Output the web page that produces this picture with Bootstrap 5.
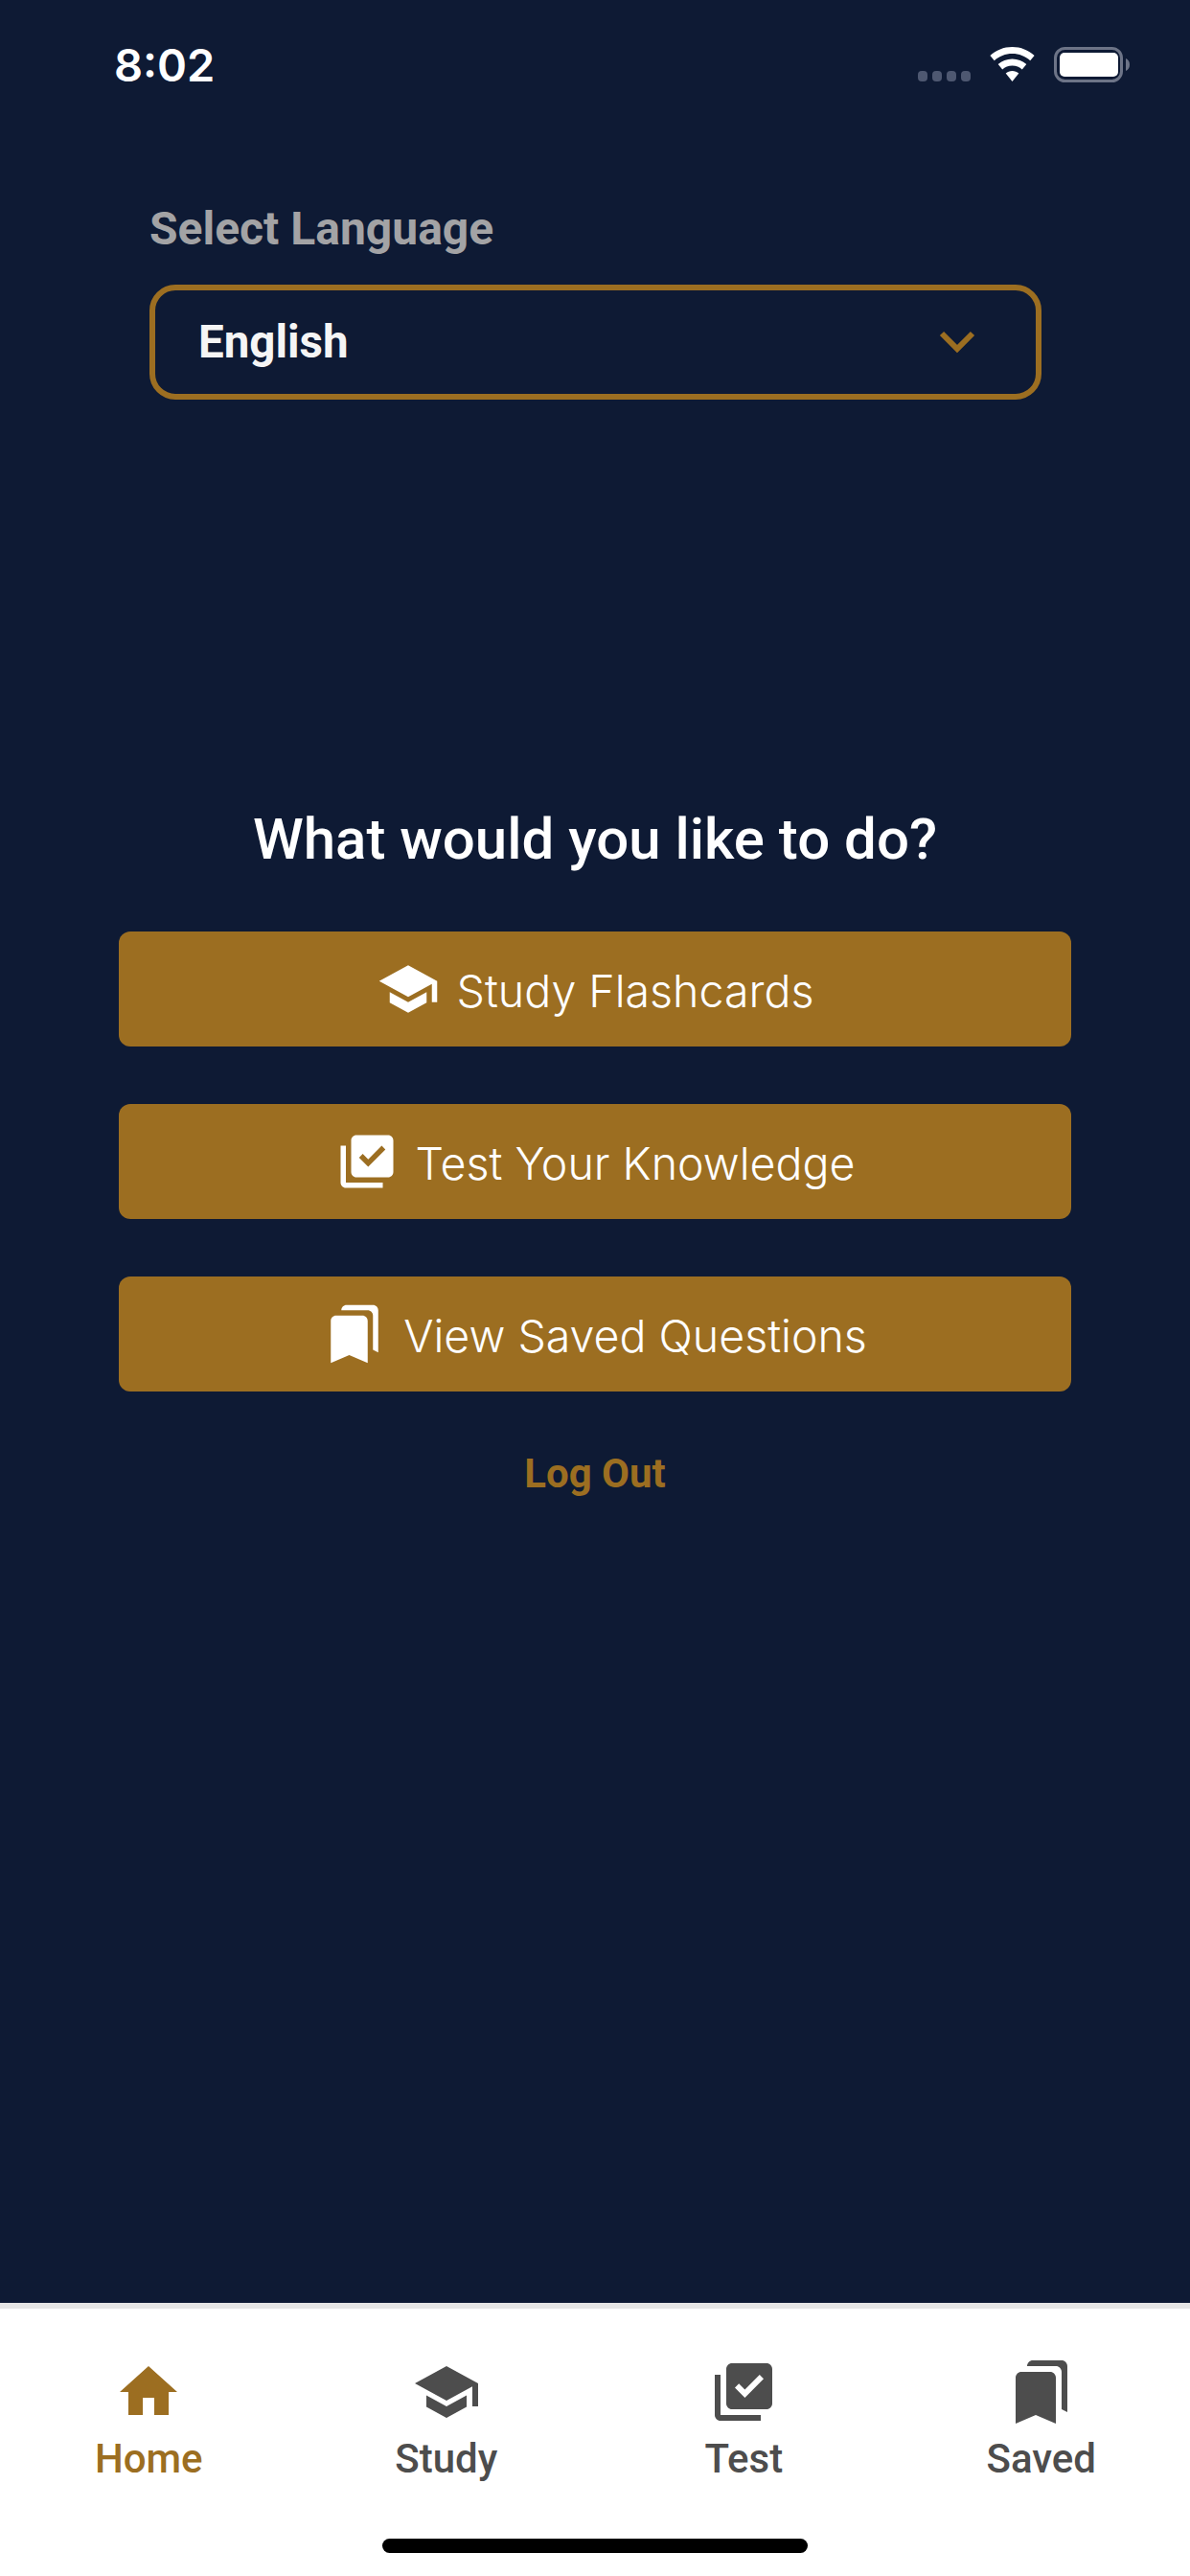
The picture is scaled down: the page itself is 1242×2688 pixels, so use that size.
<!DOCTYPE html>
<html lang="en">
<head>
<meta charset="utf-8">
<title>Home</title>
<link href="https://cdn.jsdelivr.net/npm/bootstrap@5.3.0/dist/css/bootstrap.min.css" rel="stylesheet">
<style>
html,body{margin:0;background:#0e1a34}
body{font-family:Roboto,"Liberation Sans",sans-serif}
.app-screen{width:1242px;height:2688px;background:#0e1a34}
.status-row{height:132px;padding:0 63px 0 119px}
.clock{font-family:Inter,sans-serif;font-weight:600;font-size:47px;line-height:1;color:#fff;padding-top:44px}
.status-icons{padding-top:49px;gap:20px}
.sig-dots{gap:4.5px;padding-top:25px}
.sig-dots span{display:block;width:10.5px;height:11px;border-radius:4px;background:#4e5871}
.batt{width:79px;height:37px}
.lang-block{padding:0 155px 0 156px;margin-top:80px}
.lang-label{font-size:48px;font-weight:700;color:#a3a3a5;line-height:54px;margin-bottom:31px}
.lang-select{height:120px;border:6px solid #9c6e21;border-radius:27px;padding:2px 63px 0 45px;color:#f5f5f5;font-size:47.5px;font-weight:700;line-height:1}
.lang-select svg{margin-top:-2px}
.prompt{margin-top:425px;font-size:60px;font-weight:500;color:#fff;line-height:68px;text-align:center}
.action-list{padding:0 124px;margin-top:62px;gap:60px}
.action-btn{height:120px;background:#9c6e21;border:0;border-radius:12px;color:#fff;font-family:Inter,sans-serif;font-size:46.5px;font-weight:350;line-height:1;gap:18px}
.action-btn span{padding-top:5px}
.action-btn svg{width:66px;height:66px;fill:#fff;flex:none}
.logout{margin-top:61px;color:#9c6e21;font-size:42px;font-weight:700;line-height:50px;text-align:center}
.tabs{height:285px;background:#fff;border-top:6px solid #e6e6e6;position:relative}
.tab-item{flex:1 1 0;padding-top:51px;color:#4d4d4d;font-size:42px;font-weight:500;line-height:50px;text-decoration:none}
.tab-item svg{display:block;width:72px;height:72px;fill:currentColor;margin:0 auto 9px}
.tab-item.on{color:#9c6e21}
.home-bar{position:absolute;left:399px;top:240px;width:444px;height:15px;background:#000;border-radius:8px}
</style>
</head>
<body>
<div class="app-screen d-flex flex-column">
  <div class="status-row d-flex justify-content-between flex-shrink-0">
    <div class="clock">8:02</div>
    <div class="status-icons d-flex align-items-start">
      <div class="sig-dots d-flex"><span></span><span></span><span></span><span></span></div>
      <svg width="47" height="36" viewBox="0 0 47 36" class="d-block" aria-hidden="true">
        <path fill="#fff" d="M23.5 0C14.6 0 6.5 3.4.4 9l4.4 5.2c5-4.5 11.5-7.2 18.7-7.2s13.7 2.7 18.7 7.2L46.6 9C40.500 3.400 32.400 0 23.500 0z"/>
        <path fill="#fff" d="M23.500 12.500c-5.700 0-10.900 2.100-14.800 5.600l4.500 5.300c2.700-2.400 6.300-3.900 10.300-3.900s7.600 1.500 10.300 3.900l4.500-5.300c-3.900-3.500-9.100-5.600-14.800-5.600z"/>
        <path fill="#fff" d="M23.500 25c-2.600 0-5 1-6.800 2.600L23.500 36l6.800-8.400C28.500 26 26.100 25 23.500 25z"/>
      </svg>
      <svg class="batt d-block" viewBox="0 0 79 37" aria-hidden="true">
        <rect x="1.500" y="1.500" width="69" height="34" rx="10" fill="none" stroke="#6d7487" stroke-width="3"/>
        <rect x="6" y="6" width="61" height="25" rx="5" fill="#fff"/>
        <path fill="#6d7487" d="M75 12c2.500 1 4 3.500 4 6.500S77.500 24 75 25z"/>
      </svg>
    </div>
  </div>

  <div class="lang-block flex-shrink-0">
    <div class="lang-label">Select Language</div>
    <div class="lang-select d-flex align-items-center justify-content-between">
      <span>English</span>
      <svg width="38" height="24" viewBox="0 0 38 24" aria-hidden="true"><path d="M3 3l16 16L35 3" fill="none" stroke="#9c6e21" stroke-width="6"/></svg>
    </div>
  </div>

  <div class="prompt">What would you like to do?</div>

  <div class="action-list d-flex flex-column">
    <button type="button" class="btn action-btn d-flex align-items-center justify-content-center">
      <svg viewBox="0 0 24 24" aria-hidden="true"><path d="M5 13.180v4L12 21l7-3.820v-4L12 17l-7-3.820zM12 3L1 9l11 6 9-4.910V17h2V9L12 3z"/></svg>
      <span>Study Flashcards</span>
    </button>
    <button type="button" class="btn action-btn d-flex align-items-center justify-content-center">
      <svg viewBox="0 0 24 24" aria-hidden="true"><path d="M4 6H2v14c0 1.100.9 2 2 2h14v-2H4V6zm16-4H8c-1.100 0-2 .9-2 2v12c0 1.100.9 2 2 2h12c1.100 0 2-.9 2-2V4c0-1.100-.9-2-2-2zm-7.530 12L9 10.500l1.400-1.410 2.070 2.080L17.600 6 19 7.410 12.470 14z"/></svg>
      <span>Test Your Knowledge</span>
    </button>
    <button type="button" class="btn action-btn d-flex align-items-center justify-content-center">
      <svg viewBox="0 0 24 24" aria-hidden="true"><path d="M19 18l2 1V3c0-1.100-.9-2-2-2H8.990C7.890 1 7 1.900 7 3h10c1.100 0 2 .9 2 2v13zM15 5H5c-1.100 0-2 .9-2 2v16l7-3 7 3V7c0-1.100-.9-2-2-2z"/></svg>
      <span>View Saved Questions</span>
    </button>
  </div>

  <div class="logout">Log Out</div>

  <nav class="tabs d-flex text-center mt-auto flex-shrink-0">
    <a class="tab-item on" href="#">
      <svg viewBox="0 0 24 24" aria-hidden="true"><path d="M10 20v-6h4v6h5v-8h3L12 3 2 12h3v8z"/></svg>Home
    </a>
    <a class="tab-item" href="#">
      <svg viewBox="0 0 24 24" aria-hidden="true"><path d="M5 13.180v4L12 21l7-3.820v-4L12 17l-7-3.820zM12 3L1 9l11 6 9-4.910V17h2V9L12 3z"/></svg>Study
    </a>
    <a class="tab-item" href="#">
      <svg viewBox="0 0 24 24" aria-hidden="true"><path d="M4 6H2v14c0 1.100.9 2 2 2h14v-2H4V6zm16-4H8c-1.100 0-2 .9-2 2v12c0 1.100.9 2 2 2h12c1.100 0 2-.9 2-2V4c0-1.100-.9-2-2-2zm-7.530 12L9 10.500l1.400-1.410 2.070 2.080L17.600 6 19 7.410 12.470 14z"/></svg>Test
    </a>
    <a class="tab-item" href="#">
      <svg viewBox="0 0 24 24" aria-hidden="true"><path d="M19 18l2 1V3c0-1.100-.9-2-2-2H8.990C7.890 1 7 1.900 7 3h10c1.100 0 2 .9 2 2v13zM15 5H5c-1.100 0-2 .9-2 2v16l7-3 7 3V7c0-1.100-.9-2-2-2z"/></svg>Saved
    </a>
    <div class="home-bar"></div>
  </nav>
</div>
<script src="https://cdn.jsdelivr.net/npm/bootstrap@5.3.0/dist/js/bootstrap.bundle.min.js"></script>
</body>
</html>
